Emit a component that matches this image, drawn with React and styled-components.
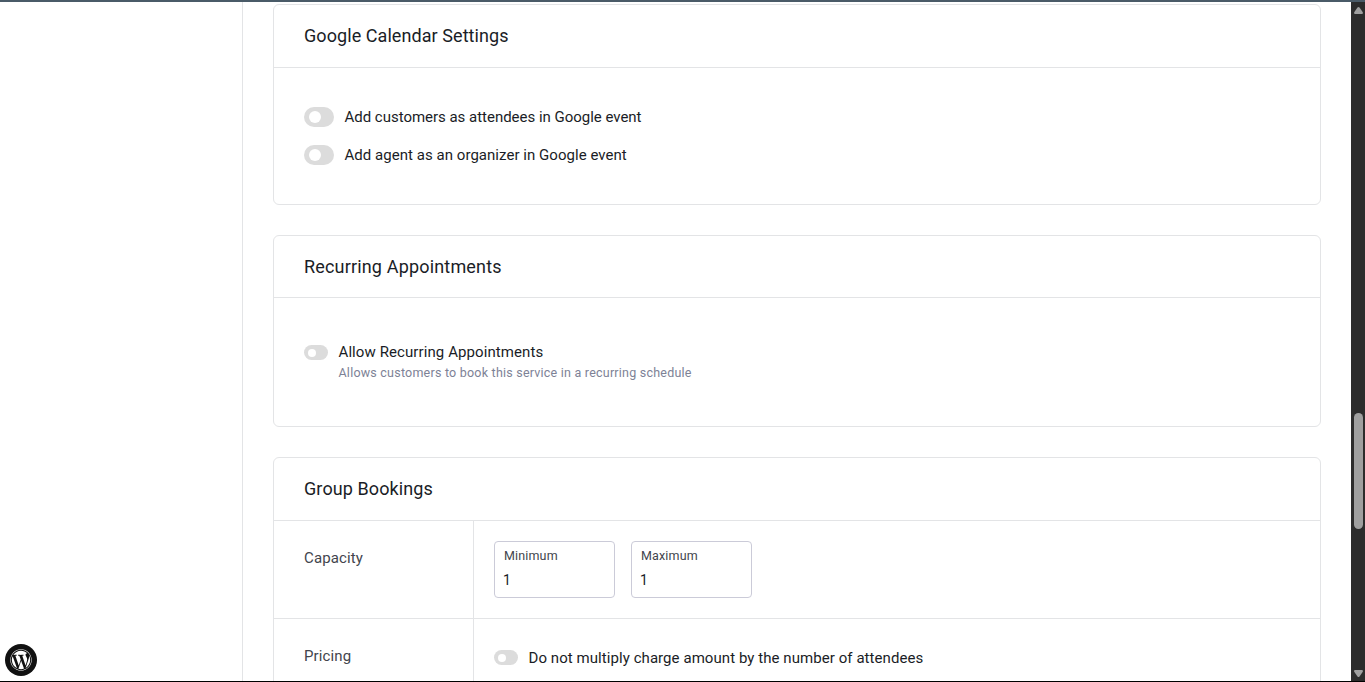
import React from "react";
import styled, { createGlobalStyle } from "styled-components";
import { FaWordpress } from "react-icons/fa";

const GlobalStyle = createGlobalStyle`
  * { box-sizing: border-box; }
  body {
    margin: 0;
    background: #fff;
    overflow: hidden;
    font-family: Roboto, "Liberation Sans", sans-serif;
    color: #1a1d26;
  }
`;

const Page = styled.div`
  position: relative;
  display: flex;
  height: 682px;
  overflow: hidden;
  border-top: 2px solid #4a5b68;
  border-bottom: 1px solid #000;
`;

const Sidebar = styled.aside`
  flex: 0 0 243px;
  border-right: 1px solid #e3e4e6;
`;

const Content = styled.main`
  flex: 1;
  min-width: 0;
  display: flex;
  flex-direction: column;
  gap: 30px;
  padding: 2px 30px 0;
`;

const Card = styled.section`
  flex: none;
  height: ${(p) => p.$height}px;
  display: flex;
  flex-direction: column;
  border: 1px solid #e3e4e6;
  border-radius: 6px;
`;

const CardHeader = styled.header`
  flex: none;
  height: ${(p) => p.$height || 63}px;
  padding: 0 30px;
  border-bottom: 1px solid #e3e4e6;
`;

const Title = styled.h3`
  margin: 0;
  font-size: 18px;
  font-weight: 400;
  line-height: 62px;
  white-space: nowrap;
  letter-spacing: ${(p) => p.$spacing}px;
`;

const ToggleList = styled.div`
  display: flex;
  flex-direction: column;
  gap: 18px;
  padding: ${(p) => p.$top}px 30px 0;
`;

const ToggleRow = styled.label`
  display: flex;
  align-items: flex-start;
  gap: 10.5px;
`;

const Track = styled.span`
  flex: none;
  display: flex;
  align-items: center;
  width: ${(p) => (p.$small ? 24 : 30)}px;
  height: ${(p) => (p.$small ? 15 : 20)}px;
  padding-left: ${(p) => (p.$small ? 4 : 5)}px;
  border-radius: 10px;
  background: #dcdcdc;

  &::after {
    content: "";
    width: ${(p) => (p.$small ? 8 : 12)}px;
    height: ${(p) => (p.$small ? 8 : 12)}px;
    border-radius: 50%;
    background: #fff;
  }
`;

const ToggleText = styled.span`
  display: flex;
  flex-direction: column;
`;

const Label = styled.span`
  font-size: 15px;
  line-height: ${(p) => p.$line}px;
  white-space: nowrap;
  letter-spacing: ${(p) => p.$spacing}px;
`;

const Description = styled.span`
  margin-top: 5px;
  font-size: 12.5px;
  line-height: 16px;
  color: #7d8296;
  white-space: nowrap;
  letter-spacing: ${(p) => p.$spacing}px;
`;

const FieldRow = styled.div`
  display: flex;
  height: 98px;
  border-bottom: 1px solid #e3e4e6;
`;

const FieldName = styled.div`
  flex: 0 0 200px;
  padding: 27px 30px 0;
  border-right: 1px solid #e3e4e6;
  font-size: 15px;
  line-height: 20px;
  color: #42454d;
  letter-spacing: 0.12px;
`;

const FieldBody = styled.div`
  flex: 1;
  display: flex;
  align-items: flex-start;
  gap: 16px;
  padding: ${(p) => p.$top}px 20px 0;
`;

const NumberField = styled.div`
  display: flex;
  flex-direction: column;
  width: 121px;
  height: 57px;
  padding: 6px 9px 0;
  border: 1px solid #cbcbd8;
  border-radius: 4px;
`;

const Caption = styled.span`
  font-size: 12.5px;
  line-height: 16px;
  color: #42454d;
  letter-spacing: 0.15px;
`;

const Value = styled.span`
  margin: 6px 0 0 -1px;
  font-size: 14px;
  line-height: 20px;
`;

const ScrollBar = styled.div`
  flex: 0 0 14px;
  display: flex;
  flex-direction: column;
  align-items: center;
  background: #2c2c2c;
  padding: 5px 0 4px 1px;
`;

const Arrow = styled.svg`
  flex: none;
  display: block;
  width: 9px;
  height: 7px;
  fill: #9f9f9f;
`;

const Thumb = styled.div`
  width: 9px;
  height: 116px;
  margin: 399px 0 auto;
  border-radius: 5px;
  background: #9f9f9f;
`;

const WordPressBadge = styled.div`
  position: absolute;
  left: 5px;
  bottom: 5px;
  display: flex;
  align-items: center;
  justify-content: center;
  width: 32px;
  height: 32px;
  border-radius: 50%;
  background: #111;
  color: #fff;
  font-size: 22px;
`;

function Toggle({ small, text, spacing, line = 20, note, noteSpacing }) {
  return (
    <ToggleRow>
      <Track $small={small} />
      <ToggleText>
        <Label $line={line} $spacing={spacing}>{text}</Label>
        {note && <Description $spacing={noteSpacing}>{note}</Description>}
      </ToggleText>
    </ToggleRow>
  );
}

export default function App() {
  return (
    <>
      <GlobalStyle />
      <Page>
        <Sidebar />
        <Content>
          <Card $height={201}>
            <CardHeader>
              <Title $spacing={0.07}>Google Calendar Settings</Title>
            </CardHeader>
            <ToggleList $top={39}>
              <Toggle text="Add customers as attendees in Google event" spacing={-0.02} />
              <Toggle text="Add agent as an organizer in Google event" spacing={0.04} />
            </ToggleList>
          </Card>

          <Card $height={192}>
            <CardHeader $height={62}>
              <Title $spacing={0.17}>Recurring Appointments</Title>
            </CardHeader>
            <ToggleList $top={47}>
              <Toggle
                small
                line={15}
                text="Allow Recurring Appointments"
                spacing={0.09}
                note="Allows customers to book this service in a recurring schedule"
                noteSpacing={0.22}
              />
            </ToggleList>
          </Card>

          <Card $height={320}>
            <CardHeader>
              <Title $spacing={0.1}>Group Bookings</Title>
            </CardHeader>
            <FieldRow>
              <FieldName>Capacity</FieldName>
              <FieldBody $top={20}>
                <NumberField>
                  <Caption>Minimum</Caption>
                  <Value>1</Value>
                </NumberField>
                <NumberField>
                  <Caption>Maximum</Caption>
                  <Value>1</Value>
                </NumberField>
              </FieldBody>
            </FieldRow>
            <FieldRow>
              <FieldName>Pricing</FieldName>
              <FieldBody $top={31}>
                <Toggle
                  small
                  line={17}
                  text="Do not multiply charge amount by the number of attendees"
                  spacing={0.065}
                />
              </FieldBody>
            </FieldRow>
          </Card>
        </Content>
        <ScrollBar>
          <Arrow viewBox="0 0 9 7"><path d="M3.5 .6Q4.5-.5 5.5 .6L8.8 5.2Q9.2 7 8 7H1Q-.2 7 .2 5.2Z" /></Arrow>
          <Thumb />
          <Arrow viewBox="0 0 9 7"><path d="M3.5 6.4Q4.5 7.5 5.5 6.4L8.8 1.8Q9.2 0 8 0H1Q-.2 0 .2 1.8Z" /></Arrow>
        </ScrollBar>
        <WordPressBadge><FaWordpress /></WordPressBadge>
      </Page>
    </>
  );
}
